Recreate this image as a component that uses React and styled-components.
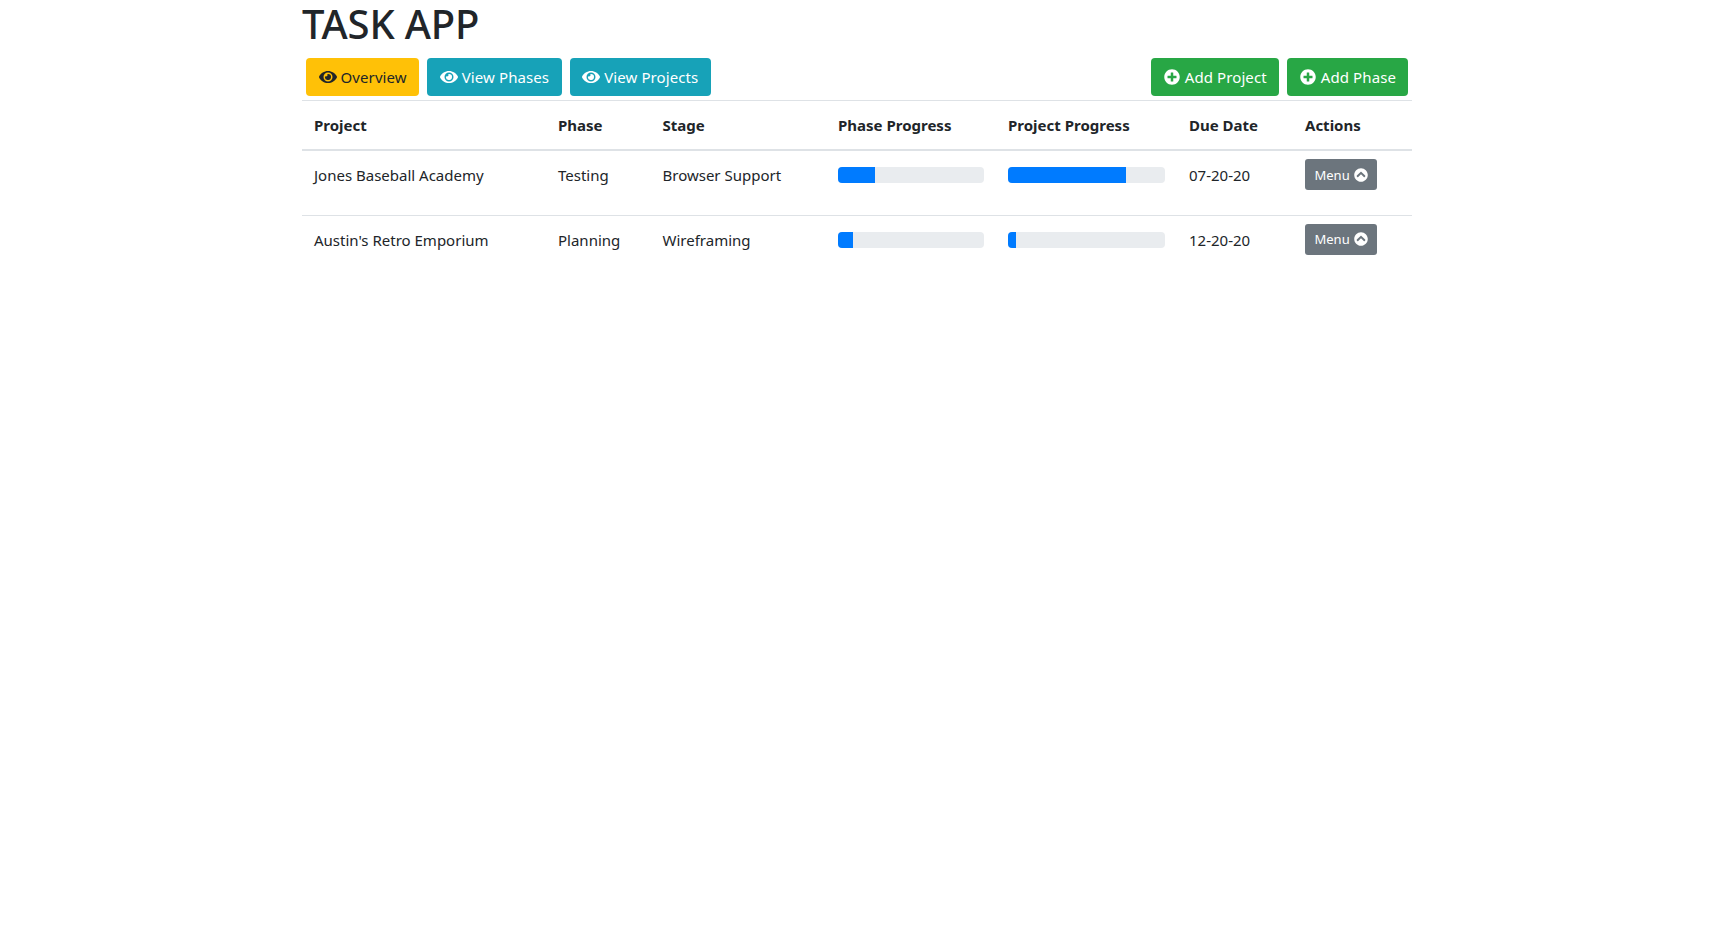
import React from 'react';
import styled, { createGlobalStyle } from 'styled-components';
import { FaEye, FaPlusCircle, FaChevronCircleUp } from 'react-icons/fa';

const GlobalStyle = createGlobalStyle`
  html, body {
    margin: 0;
    background: #fff;
    color: #212529;
    font-family: "Noto Sans", "Open Sans", sans-serif;
    font-size: 16px;
    line-height: 1.5;
  }
`;

const COLORS = {
  warning: { bg: '#ffc107', fg: '#212529', pad: '12.5px' },
  info: { bg: '#17a2b8', fg: '#fff', pad: '12.5px' },
  success: { bg: '#28a745', fg: '#fff', pad: '12px' },
};

const PROJECTS = [
  { name: 'Jones Baseball Academy', phase: 'Testing', stage: 'Browser Support', phaseProgress: 25, projectProgress: 75, due: '07-20-20' },
  { name: "Austin's Retro Emporium", phase: 'Planning', stage: 'Wireframing', phaseProgress: 10, projectProgress: 5, due: '12-20-20' },
];

const COLUMNS = [244, 104.5, 175.5, 170, 181, 116, 119];

export default function App() {
  return (
    <Page>
      <GlobalStyle />
      <Title>TASK APP</Title>
      <Toolbar>
        <ButtonGroup>
          <ToolbarButton $variant="warning"><FaEye />Overview</ToolbarButton>
          <ToolbarButton $variant="info"><FaEye />View Phases</ToolbarButton>
          <ToolbarButton $variant="info"><FaEye />View Projects</ToolbarButton>
        </ButtonGroup>
        <ButtonGroup>
          <ToolbarButton $variant="success"><FaPlusCircle />Add Project</ToolbarButton>
          <ToolbarButton $variant="success"><FaPlusCircle />Add Phase</ToolbarButton>
        </ButtonGroup>
      </Toolbar>
      <Table>
        <colgroup>
          {COLUMNS.map((width) => <col key={width} width={width} />)}
        </colgroup>
        <thead>
          <tr>
            <HeadCell>Project</HeadCell>
            <HeadCell>Phase</HeadCell>
            <HeadCell>Stage</HeadCell>
            <HeadCell>Phase Progress</HeadCell>
            <HeadCell>Project Progress</HeadCell>
            <HeadCell>Due Date</HeadCell>
            <HeadCell>Actions</HeadCell>
          </tr>
        </thead>
        <tbody>
          {PROJECTS.map((project) => (
            <tr key={project.name}>
              <Cell>{project.name}</Cell>
              <Cell>{project.phase}</Cell>
              <Cell>{project.stage}</Cell>
              <Cell>
                <Progress><ProgressFill style={{ width: `${project.phaseProgress}%` }} /></Progress>
              </Cell>
              <Cell>
                <Progress><ProgressFill style={{ width: `${project.projectProgress}%` }} /></Progress>
              </Cell>
              <Cell>{project.due}</Cell>
              <ActionCell>
                <MenuButton>Menu <FaChevronCircleUp /></MenuButton>
              </ActionCell>
            </tr>
          ))}
        </tbody>
      </Table>
    </Page>
  );
}

const Page = styled.div`
  width: 1110px;
  margin-left: 302px;
`;

const Title = styled.h1`
  margin: 0 0 8px;
  font-size: 40px;
  font-weight: 500;
  letter-spacing: -0.15px;
  line-height: 48px;
  height: 50px;
`;

const Toolbar = styled.div`
  display: flex;
  justify-content: space-between;
  padding: 0 4px 4px;
  border-bottom: 1px solid #dee2e6;
`;

const ButtonGroup = styled.div`
  display: flex;
  gap: 8px;
`;

const ToolbarButton = styled.button`
  display: inline-flex;
  align-items: center;
  gap: 4px;
  height: 38px;
  padding: 0 ${({ $variant }) => COLORS[$variant].pad};
  border: 0;
  border-radius: 4px;
  font: inherit;
  font-size: 15px;
  letter-spacing: 0.1px;
  background: ${({ $variant }) => COLORS[$variant].bg};
  color: ${({ $variant }) => COLORS[$variant].fg};

  svg {
    width: 18px;
    height: 16px;
  }
`;

const Table = styled.table`
  width: 1110px;
  table-layout: fixed;
  border-collapse: collapse;
`;

const HeadCell = styled.th`
  box-sizing: border-box;
  height: 49px;
  padding: 0 12px;
  border-bottom: 2px solid #dee2e6;
  text-align: left;
  font-size: 15px;
  font-weight: 700;
`;

const Cell = styled.td`
  box-sizing: border-box;
  height: 65px;
  padding: 12px;
  border-top: 1px solid #dee2e6;
  vertical-align: top;
  font-size: 15px;
  line-height: 24px;
`;

const ActionCell = styled(Cell)`
  padding-top: 8px;
`;

const Progress = styled.div`
  height: 16px;
  margin-top: 4px;
  overflow: hidden;
  border-radius: 4px;
  background: #e9ecef;
`;

const ProgressFill = styled.div`
  height: 100%;
  background: #007bff;
`;

const MenuButton = styled.button`
  display: inline-flex;
  align-items: center;
  gap: 4px;
  height: 31px;
  padding: 0 9.5px;
  border: 0;
  border-radius: 3px;
  font: inherit;
  font-size: 13px;
  background: #6c757d;
  color: #fff;

  svg {
    width: 14px;
    height: 14px;
  }
`;
